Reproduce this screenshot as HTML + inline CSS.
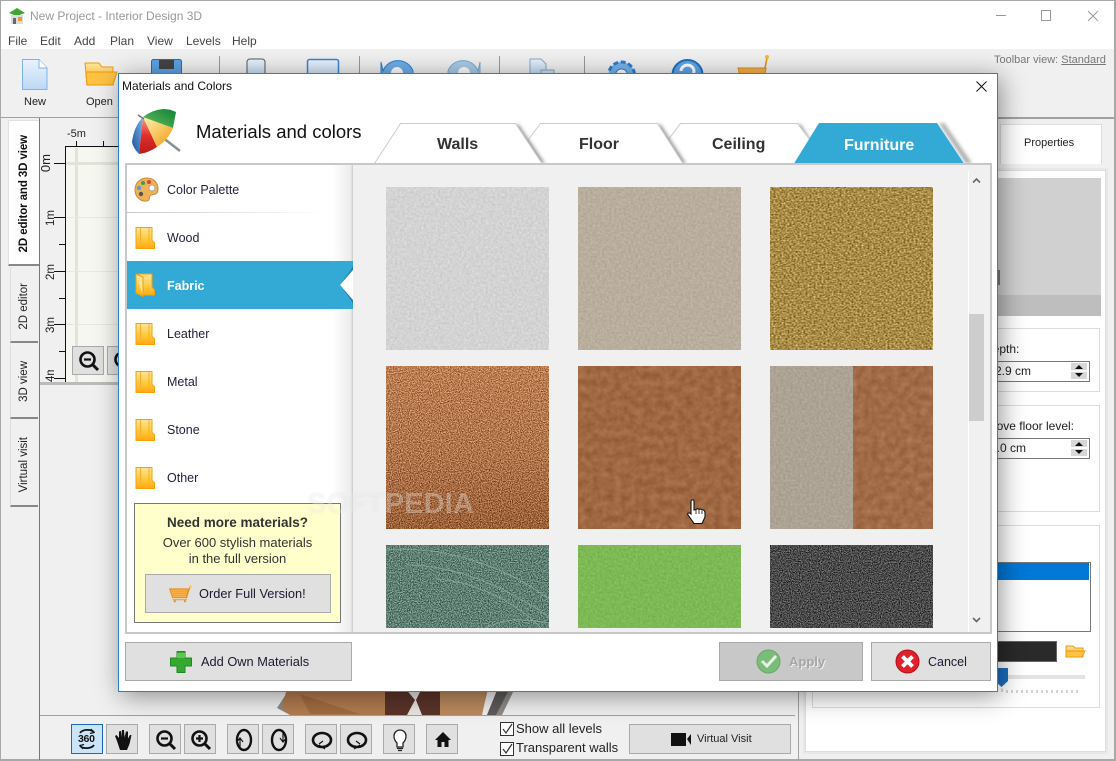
<!DOCTYPE html>
<html><head><meta charset="utf-8"><title>Interior Design 3D</title>
<style>
html,body{margin:0;padding:0;width:1116px;height:761px;overflow:hidden;background:#f0f0f0}
body{font-family:"Liberation Sans",sans-serif;font-size:12px;color:#222;position:relative}
.a{position:absolute}
.t{position:absolute;white-space:nowrap;line-height:14px}
.tb{position:absolute;background:#e0e0e0;border:1px solid #aaa;box-sizing:border-box}
.v{position:absolute;writing-mode:vertical-rl;transform:rotate(180deg);white-space:nowrap;line-height:14px}
.item{position:absolute;left:167px;font-size:12.5px;color:#1f1f3a;line-height:16px;white-space:nowrap}
.tab{position:absolute;font-weight:bold;font-size:16px;color:#333;line-height:18px;white-space:nowrap}
.btn{position:absolute;background:#e0e0e0;border:1px solid #aaa;box-sizing:border-box;font-size:12.5px;color:#1a1a30}
.vtab{position:absolute;background:#f0f0f0;border-bottom:2px solid #888;border-left:1px solid #ddd;box-sizing:border-box}
.grp{position:absolute;border:1px solid #ddd;box-sizing:border-box;left:812px;width:288px;background:#fff}
.inp{position:absolute;border:1px solid #777;box-sizing:border-box;background:#fff;left:980px;width:110px;height:21px}
</style></head><body>
<svg width="0" height="0" style="position:absolute"><defs>
<linearGradient id="fg" x1="0" y1="0" x2="0" y2="1"><stop offset="0" stop-color="#ffe49a"/><stop offset=".55" stop-color="#ffc93f"/><stop offset="1" stop-color="#ffa80a"/></linearGradient>
<linearGradient id="og" x1="0" y1="0" x2="0" y2="1"><stop offset="0" stop-color="#ffe49a"/><stop offset="1" stop-color="#f7a616"/></linearGradient>
<linearGradient id="bg" x1="0" y1="0" x2="0" y2="1"><stop offset="0" stop-color="#eaf3fd"/><stop offset="1" stop-color="#bcd8f4"/></linearGradient>
<symbol id="folder" viewBox="0 0 21 22"><path d="M1 .5H17V13.5L19.5 16V21.5H1Z" fill="url(#fg)" stroke="#f6a00a"/><path d="M5.5 1V21M14 1V21" stroke="#f7b028" stroke-width="1"/></symbol>
<symbol id="zm" viewBox="0 0 22 22"><circle cx="9.500" cy="9.500" r="7" fill="none" stroke="#111" stroke-width="2.600"/><path d="M14.500 14.500L20 20" stroke="#111" stroke-width="3"/><path d="M6 9.500H13" stroke="#111" stroke-width="2.200"/></symbol>
<symbol id="zp" viewBox="0 0 22 22"><circle cx="9.500" cy="9.500" r="7" fill="none" stroke="#111" stroke-width="2.600"/><path d="M14.500 14.500L20 20" stroke="#111" stroke-width="3"/><path d="M6 9.500H13M9.500 6V13" stroke="#111" stroke-width="2.200"/></symbol>
<symbol id="cart" viewBox="0 0 36 24"><path d="M1 5H27L24 17H5Z" fill="#f9b24b" stroke="#ea8d12" stroke-width="1.500"/><path d="M4 8H25M5 11H24M6 14H24" stroke="#d98d20" stroke-width="1" stroke-dasharray="1.500 1"/><path d="M24 18L29 2" stroke="#ea8d12" stroke-width="1.500"/><circle cx="29.500" cy="2" r="1.800" fill="#ffc53a"/><path d="M5 20H25" stroke="#ea8d12" stroke-width="1.200"/><circle cx="8" cy="22" r="1.500" fill="#ea8d12"/><circle cx="22" cy="22" r="1.500" fill="#ea8d12"/></symbol>
<filter id="n1" x="0" y="0" width="100%" height="100%" color-interpolation-filters="sRGB"><feTurbulence type="fractalNoise" baseFrequency=".42" numOctaves="2" seed="3"/><feColorMatrix values="1 0 0 0 0 1 0 0 0 0 1 0 0 0 0 0 0 0 0 1"/><feComposite in="SourceGraphic" operator="arithmetic" k1="0" k2="1" k3=".14" k4="-.07"/></filter>
<filter id="n2" x="0" y="0" width="100%" height="100%" color-interpolation-filters="sRGB"><feTurbulence type="fractalNoise" baseFrequency=".5 .62" numOctaves="2" seed="8"/><feColorMatrix values="1 0 0 0 0 1 0 0 0 0 1 0 0 0 0 0 0 0 0 1"/><feComposite in="SourceGraphic" operator="arithmetic" k1="0" k2="1" k3=".75" k4="-.375"/></filter>
<filter id="n3" x="0" y="0" width="100%" height="100%" color-interpolation-filters="sRGB"><feTurbulence type="fractalNoise" baseFrequency=".9" numOctaves="2" seed="5"/><feColorMatrix values="1 0 0 0 0 1 0 0 0 0 1 0 0 0 0 0 0 0 0 1"/><feComposite in="SourceGraphic" operator="arithmetic" k1="0" k2="1" k3="1" k4="-.5"/></filter>
<filter id="n4" x="0" y="0" width="100%" height="100%" color-interpolation-filters="sRGB"><feTurbulence type="fractalNoise" baseFrequency=".14" numOctaves="3" seed="11"/><feColorMatrix values="1 0 0 0 0 1 0 0 0 0 1 0 0 0 0 0 0 0 0 1"/><feComposite in="SourceGraphic" operator="arithmetic" k1="0" k2="1" k3=".16" k4="-.08"/></filter>
<linearGradient id="cu" x1="0" y1="0" x2="0" y2="1"><stop offset="0" stop-color="#bb7e53"/><stop offset=".55" stop-color="#b0744b"/><stop offset="1" stop-color="#9a6038"/></linearGradient>
</defs></svg>

<!-- window frame -->
<div class="a" style="left:0;top:0;width:1116px;height:761px;box-sizing:border-box;border:1px solid #a8a8a8;border-width:1px 2px 2px 1px"></div>
<div class="a" style="left:1px;top:1px;width:1113px;height:48px;background:#fff"></div>
<svg class="a" style="left:8px;top:7px" width="19" height="18"><path d="M1 6L9 1L17 6L9 9Z" fill="#3fa535"/><path d="M3 8H15V17H3Z" fill="#d9dde0"/><path d="M5 11H8V17H5Z" fill="#667"/><path d="M10 10H14V14H10Z" fill="#e8a020"/></svg>
<div class="t" style="left:30px;top:9px;color:#999">New Project - Interior Design 3D</div>
<div class="t" style="left:8px;top:34px;color:#444">File</div>
<div class="t" style="left:40px;top:34px;color:#444">Edit</div>
<div class="t" style="left:74px;top:34px;color:#444">Add</div>
<div class="t" style="left:110px;top:34px;color:#444">Plan</div>
<div class="t" style="left:147px;top:34px;color:#444">View</div>
<div class="t" style="left:186px;top:34px;color:#444">Levels</div>
<div class="t" style="left:232px;top:34px;color:#444">Help</div>
<svg class="a" style="left:995px;top:8px" width="110" height="16" fill="none" stroke="#999"><path d="M1 7.500H11"/><rect x="46.500" y="2.500" width="9" height="10"/><path d="M93 3L103 13M103 3L93 13"/></svg>

<!-- toolbar -->
<div class="a" style="left:1px;top:49px;width:1113px;height:68px;background:#f0f0f0;border-bottom:1px solid #a0a0a0"></div>
<svg class="a" style="left:0;top:50px" width="800" height="42">
<path d="M22.500 9.500H39L47 18V39.500H22.500Z" fill="url(#bg)" stroke="#7fb2e8"/><path d="M39 9.500V18H47" fill="#fff" stroke="#7fb2e8"/>
<path d="M85 13H99L102 17H113V35H87Z" fill="url(#og)" stroke="#e89a10"/><path d="M86 22H117L113 35H87Z" fill="#ffc242" stroke="#e89a10"/>
<rect x="151.500" y="9.500" width="30" height="30" rx="2" fill="#5da2e4" stroke="#1f6fc0"/><rect x="159" y="10" width="15" height="9" fill="#444"/>
<path d="M219.500 6V24M359.500 6V24M499.500 6V24M584.500 6V24" stroke="#999"/>
<rect x="247" y="9" width="18" height="20" rx="3" fill="url(#bg)" stroke="#555"/>
<rect x="307.500" y="9.500" width="31" height="25" rx="2" fill="url(#bg)" stroke="#3a86d0" stroke-width="1.500"/>
<path d="M381 12L383 21A16 16 0 0 1 413 21V26H381Z" fill="#6daee8" stroke="#2c7fd0"/><circle cx="397" cy="23" r="6" fill="#fff"/>
<path d="M480 12L478 21A16 16 0 0 0 448 21V26H480Z" fill="#a9cbe8" stroke="#7ba9d0"/><circle cx="464" cy="23" r="6" fill="#fff"/>
<path d="M530 9H541L546 14V26H530Z" fill="url(#bg)" stroke="#88a8cc"/><rect x="541" y="20" width="13" height="8" fill="#cfe0f2" stroke="#88a8cc"/>
<circle cx="621.500" cy="25" r="13" fill="#77b3ea" stroke="#2c7fd0" stroke-width="3" stroke-dasharray="5 2.500"/><circle cx="621.500" cy="25" r="6" fill="#fff" stroke="#2c7fd0"/>
<circle cx="687.500" cy="25" r="15" fill="#5ea6e6" stroke="#1f6fc0" stroke-width="2"/><path d="M681 21A6.500 6 0 1 1 689 27" fill="none" stroke="#fff" stroke-width="3"/>
<path d="M738 18H766L764 30H741Z" fill="#f7b14a" stroke="#e58a10"/><path d="M765 18L767 8" stroke="#e58a10" stroke-width="1.500"/><circle cx="767" cy="7" r="2" fill="#ffb52a"/>
</svg>
<div class="t" style="left:24px;top:95px;color:#222;font-size:11px">New</div>
<div class="t" style="left:86px;top:95px;color:#222;font-size:11px">Open</div>
<div class="t" style="left:994px;top:53px;color:#777;font-size:11px">Toolbar view: <span style="text-decoration:underline">Standard</span></div>

<!-- left rail -->
<div class="a" style="left:39px;top:118px;width:1px;height:642px;background:#777"></div>
<div class="a" style="left:8px;top:120px;width:31px;height:146px;background:#fff;border-bottom:2px solid #888;box-sizing:border-box;border-left:1px solid #e2e2e2;border-top:1px solid #e2e2e2"></div>
<div class="v" style="left:17px;top:135px;font-weight:bold;color:#111;font-size:11.500px;letter-spacing:-.1px">2D editor and 3D view</div>
<div class="vtab" style="left:10px;top:267px;width:28px;height:76px"></div>
<div class="v" style="left:17px;top:283px;font-size:11.500px;color:#222">2D editor</div>
<div class="vtab" style="left:10px;top:345px;width:28px;height:74px"></div>
<div class="v" style="left:17px;top:361px;font-size:11.500px;color:#222">3D view</div>
<div class="vtab" style="left:10px;top:420px;width:28px;height:87px"></div>
<div class="v" style="left:17px;top:437px;font-size:11.500px;color:#222">Virtual visit</div>

<!-- canvas -->
<div class="a" style="left:40px;top:118px;width:760px;height:264px;background:#f0f0f0"></div>
<div class="a" style="left:65px;top:148px;width:735px;height:234px;background:#f7f7f1"></div>
<div class="a" style="left:75px;top:148px;width:3px;height:234px;background:#e3e3da"></div>
<div class="a" style="left:65px;top:162px;width:735px;height:3px;background:#e3e3da"></div>
<div class="a" style="left:65px;top:217px;width:735px;height:1px;background:#e8e8e0"></div>
<div class="a" style="left:65px;top:271px;width:735px;height:1px;background:#e8e8e0"></div>
<div class="a" style="left:65px;top:324px;width:735px;height:1px;background:#e8e8e0"></div>
<svg class="a" style="left:40px;top:130px" width="80" height="255" fill="none" stroke="#111"><path d="M25.500 17V252M25 16.500H80M36.500 11V16M63.500 11V16M14 33.500H25M14 87.500H25M19 114.500H25M14 141.500H25M19 168.500H25M14 194.500H25M19 221.500H25M14 248.500H25"/></svg>
<div class="t" style="left:67px;top:127px;font-size:11px;color:#222">-5m</div>
<div class="v" style="left:39px;top:154px;font-size:13px;color:#222">0m</div>
<div class="v" style="left:44px;top:210px;font-size:11.500px;color:#222">1m</div>
<div class="v" style="left:44px;top:264px;font-size:11.500px;color:#222">2m</div>
<div class="v" style="left:44px;top:317px;font-size:11.500px;color:#222">3m</div>
<div class="v" style="left:44px;top:370px;font-size:11.500px;color:#222;height:12px;overflow:hidden">4m</div>
<div class="tb" style="left:72px;top:346px;width:32px;height:29px"><svg style="position:absolute;left:5px;top:3px" width="22" height="22"><use href="#zm"/></svg></div>
<div class="tb" style="left:107px;top:346px;width:32px;height:29px"><svg style="position:absolute;left:5px;top:3px" width="22" height="22"><use href="#zp"/></svg></div>
<div class="a" style="left:40px;top:382px;width:760px;height:3px;background:#bbb"></div>

<!-- 3D scene bottom -->
<svg class="a" style="left:270px;top:688px" width="250" height="28"><path d="M7 20L20 0H245L232 27H20Z" fill="#8d8a86"/><path d="M17 0H225L218 27H20L12 20Z" fill="#b27c4f"/><path d="M30 6L90 26H40Z" fill="#a26c40"/><path d="M115 0H170V27H115Z" fill="#5a3428"/><path d="M135 0L145 12L137 27H152L146 12L152 0Z" fill="#e9e6e0"/><path d="M170 0H215V27H170Z" fill="#bb8a5e"/><path d="M218 0H228L217 27H212Z" fill="#eee"/><path d="M228 0H240L226 27H217Z" fill="#5d5a58"/></svg>

<!-- bottom toolbar -->
<div class="a" style="left:40px;top:715px;width:755px;height:1px;background:#a0a0a0"></div>
<div class="tb" style="left:71px;top:724px;width:32px;height:30px;background:#cce4f7;border-color:#1b6ab8"><svg style="position:absolute;left:5px;top:1px" width="20" height="26" fill="none" stroke="#111" stroke-width="1.800"><path d="M3 7A8 5 0 0 1 17 6M3 20A8 5 0 0 0 17 19"/><path d="M14 3L17 6.500L13 7.500M6 23L3 19.500L7 18.500" stroke-width="1.200"/></svg><div class="t" style="left:6px;top:7px;font-weight:bold;font-size:10.500px;color:#111;letter-spacing:-.3px">360</div></div>
<div class="tb" style="left:106px;top:724px;width:32px;height:30px"><svg style="position:absolute;left:6px;top:3px" width="20" height="23"><path d="M4 13L2 8L3.500 7L6 10V3.500L8 3V9.500L9 2H11L11.500 9.500L13 3.500H15V10.500L17 7H18.500L16.500 16L14 22H7Z" fill="#111"/></svg></div>
<div class="tb" style="left:149px;top:724px;width:32px;height:30px"><svg style="position:absolute;left:5px;top:4px" width="22" height="22"><use href="#zm"/></svg></div>
<div class="tb" style="left:184px;top:724px;width:32px;height:30px"><svg style="position:absolute;left:5px;top:4px" width="22" height="22"><use href="#zp"/></svg></div>
<div class="tb" style="left:227px;top:724px;width:32px;height:30px"><svg style="position:absolute;left:6px;top:2px" width="20" height="25" fill="none" stroke="#111" stroke-width="2.400"><ellipse cx="10" cy="13" rx="7" ry="10"/><path d="M6 21V12M3 15L6 11L9 15" stroke-width="1.200" fill="#fff"/></svg></div>
<div class="tb" style="left:262px;top:724px;width:32px;height:30px"><svg style="position:absolute;left:6px;top:2px" width="20" height="25" fill="none" stroke="#111" stroke-width="2.400"><ellipse cx="10" cy="13" rx="7" ry="10"/><path d="M14 5V14M11 11L14 15L17 11" stroke-width="1.200" fill="#fff"/></svg></div>
<div class="tb" style="left:305px;top:724px;width:32px;height:30px"><svg style="position:absolute;left:5px;top:6px" width="22" height="20" fill="none" stroke="#111" stroke-width="2.600"><ellipse cx="11" cy="9" rx="9" ry="7"/><path d="M8 14L14 18M8 13L12 10" stroke-width="1.200"/></svg></div>
<div class="tb" style="left:340px;top:724px;width:32px;height:30px"><svg style="position:absolute;left:5px;top:6px" width="22" height="20" fill="none" stroke="#111" stroke-width="2.600"><ellipse cx="11" cy="9" rx="9" ry="7"/><path d="M14 14L8 18M14 13L10 10" stroke-width="1.200"/></svg></div>
<div class="tb" style="left:383px;top:724px;width:32px;height:30px"><svg style="position:absolute;left:8px;top:3px" width="16" height="24" fill="#fff" stroke="#222" stroke-width="1.300"><path d="M5 15C2 12 2 9 2 8A6 6 0 0 1 14 8C14 9 14 12 11 15V19H5Z"/><path d="M5 20.500H11M6 22.500H10"/></svg></div>
<div class="tb" style="left:426px;top:724px;width:32px;height:30px"><svg style="position:absolute;left:7px;top:6px" width="18" height="17"><path d="M9 1L17 9H14.500V16H10.500V11H7.500V16H3.500V9H1Z" fill="#111"/></svg></div>
<svg class="a" style="left:499px;top:721px" width="16" height="36" fill="#fff" stroke="#333"><rect x="1.500" y="1.500" width="13" height="13"/><rect x="1.500" y="21.500" width="13" height="13"/><path d="M4 8L7 12L13 3M4 28L7 32L13 23" fill="none" stroke-width="1.200"/></svg>
<div class="t" style="left:516px;top:722px;font-size:13px;color:#222">Show all levels</div>
<div class="t" style="left:516px;top:741px;font-size:13px;color:#222">Transparent walls</div>
<div class="tb" style="left:629px;top:724px;width:162px;height:30px"><svg style="position:absolute;left:41px;top:8px" width="22" height="13"><rect x="0" y="0" width="15" height="13" fill="#111"/><path d="M16 6L20 1V12Z" fill="#111"/></svg><div class="t" style="left:67px;top:7px;font-size:11px;color:#222">Virtual Visit</div></div>

<!-- right panel -->
<div class="a" style="left:798px;top:118px;width:316px;height:1px;background:#a0a0a0"></div>
<div class="a" style="left:798px;top:118px;width:1px;height:642px;background:#a0a0a0"></div>
<div class="a" style="left:1000px;top:124px;width:102px;height:40px;background:#fff;border:1px solid #ddd;border-bottom:0;box-sizing:border-box"></div>
<div class="t" style="left:1024px;top:136px;font-size:11px;color:#222">Properties</div>
<div class="a" style="left:805px;top:170px;width:301px;height:582px;background:#fff;border:1px solid #ddd;box-shadow:0 0 0 2px #e8e8e8;box-sizing:border-box"></div>
<div class="a" style="left:810px;top:178px;width:291px;height:117px;background:#d0d0d0"></div>
<div class="a" style="left:810px;top:295px;width:291px;height:21px;background:#bebebe"></div>
<div class="a" style="left:997px;top:270px;width:3px;height:15px;background:#777"></div>
<div class="grp" style="top:328px;height:64px"></div>
<div class="t" style="left:984px;top:342px;font-size:12px;color:#222">Depth:</div>
<div class="inp" style="top:361px"></div>
<div class="t" style="left:960px;top:364px;font-size:12px;color:#222;width:71px;text-align:right">12.9 cm</div>
<svg class="a" style="left:1070px;top:362px" width="18" height="18"><rect x="1" y="1" width="16" height="7" fill="#d8d8d8"/><rect x="1" y="10" width="16" height="7" fill="#d8d8d8"/><path d="M5 7L9 3L13 7ZM5 11H13L9 15Z" fill="#111"/></svg>
<div class="grp" style="top:405px;height:107px"></div>
<div class="t" style="left:960px;top:419px;font-size:12px;color:#222;width:114px;text-align:right">above floor level:</div>
<div class="inp" style="top:438px"></div>
<div class="t" style="left:960px;top:441px;font-size:12px;color:#222;width:66px;text-align:right">0.0 cm</div>
<svg class="a" style="left:1070px;top:439px" width="18" height="18"><rect x="1" y="1" width="16" height="7" fill="#d8d8d8"/><rect x="1" y="10" width="16" height="7" fill="#d8d8d8"/><path d="M5 7L9 3L13 7ZM5 11H13L9 15Z" fill="#111"/></svg>
<div class="grp" style="top:525px;height:183px"></div>
<div class="a" style="left:820px;top:562px;width:271px;height:70px;border:1px solid #777;box-sizing:border-box;background:#fff"></div>
<div class="a" style="left:822px;top:563px;width:267px;height:17px;background:#0078d7"></div>
<div class="a" style="left:820px;top:641px;width:237px;height:21px;background:#2a2a2a;border:1px solid #666;box-sizing:border-box"></div>
<svg class="a" style="left:1064px;top:644px" width="22" height="15"><path d="M2 2H9L11 4H19V13H2Z" fill="url(#og)" stroke="#e89a10"/><path d="M2 7H21L18 13H2Z" fill="#ffc242" stroke="#e89a10"/></svg>
<div class="a" style="left:820px;top:675px;width:265px;height:4px;background:#e3e3e3"></div>
<svg class="a" style="left:990px;top:667px" width="100" height="28"><path d="M5 1H18V14L11.500 20L5 14Z" fill="#1a6fc0"/><path d="M12 21.500V25M17 23V26M22 23V26M27 23V26M32 23V26M37 23V26M42 23V26M47 23V26M52 23V26M57 23V26M62 23V26M67 23V26M72 23V26M77 23V26M82 23V26M87 23V26" stroke="#aaa"/></svg>

<!-- Dialog -->
<div class="a" style="left:118px;top:73px;width:880px;height:619px;background:#fff;border:1px solid #2b7fc9;box-sizing:border-box;box-shadow:3px 4px 24px rgba(0,0,0,.42)"></div>
<div class="t" style="left:122px;top:79px;color:#111">Materials and Colors</div>
<svg class="a" style="left:975px;top:80px" width="13" height="13" fill="none" stroke="#111"><path d="M1.500 1.500L11.500 11.500M11.500 1.500L1.500 11.500"/></svg>
<svg class="a" style="left:130px;top:106px" width="52" height="50">
<defs><linearGradient id="ye" x1="0" y1="0" x2="1" y2="1"><stop offset="0" stop-color="#fff2b0"/><stop offset="1" stop-color="#f19a12"/></linearGradient>
<linearGradient id="re" x1="0" y1="0" x2="0" y2="1"><stop offset="0" stop-color="#f5a08a"/><stop offset=".5" stop-color="#e0302a"/><stop offset="1" stop-color="#b81a1a"/></linearGradient>
<linearGradient id="gr" x1="0" y1="1" x2="1" y2="0"><stop offset="0" stop-color="#6ac35a"/><stop offset="1" stop-color="#0f7f3a"/></linearGradient>
<linearGradient id="bl" x1="1" y1="0" x2="0" y2="1"><stop offset="0" stop-color="#7fb6e8"/><stop offset="1" stop-color="#174f9e"/></linearGradient></defs>
<path d="M32 31L50 45" stroke="#8a8f94" stroke-width="2.500"/>
<path d="M2 36Q4 20 13 11L9 48Q3 42 2 36Z" fill="url(#bl)"/>
<path d="M13 11L27 41Q18 47 9 48Z" fill="url(#re)"/>
<path d="M13 11L43 22Q38 34 27 41Z" fill="url(#ye)"/>
<path d="M13 11Q22 4 33 3Q40 3 46 6L43 22Z" fill="url(#gr)"/>
<path d="M8 9L14 13" stroke="#777" stroke-width="1.500"/>
</svg>
<div class="t" style="left:196px;top:121px;font-size:18.500px;line-height:22px;color:#111">Materials and colors</div>

<!-- tabs -->
<svg class="a" style="left:370px;top:120px" width="610" height="46">
<defs><filter id="sh" x="-30%" y="-10%" width="160%" height="125%"><feGaussianBlur stdDeviation="1.800"/></filter></defs>
<path d="M427 3.500L452 43.500H440L424 8Z" fill="#999" filter="url(#sh)" transform="translate(3 0)"/>
<path d="M298 20L310.500 3.500H427.500L440 20L453 43.500H313Z" fill="#fff" stroke="#ccc"/>
<path d="M287 3.500L313 43.500H300L284 8Z" fill="#999" filter="url(#sh)" transform="translate(3 0)"/>
<path d="M158 20L170.500 3.500H287.500L313 43.500H172Z" fill="#fff" stroke="#ccc"/>
<path d="M145 3.500L172 43.500H160L142 8Z" fill="#999" filter="url(#sh)" transform="translate(3 0)"/>
<path d="M4.500 43.500L30.500 3.500H145.500L172 43.500Z" fill="#fff" stroke="#ccc"/>
<path d="M567 3L594 43.500H600L572 3Z" fill="#aaa" filter="url(#sh)" transform="translate(2 0)"/>
<path d="M424 43.500L449 3H567L594 43.500Z" fill="#33aad6"/>
</svg>
<div class="tab" style="left:437px;top:136px">Walls</div>
<div class="tab" style="left:579px;top:136px">Floor</div>
<div class="tab" style="left:712px;top:136px">Ceiling</div>
<div class="tab" style="left:844px;top:137px;color:#fff">Furniture</div>

<!-- main frame -->
<div class="a" style="left:125px;top:163px;width:867px;height:471px;border:2px solid #c8c8c8;box-sizing:border-box;background:#f0f0f0"></div>
<div class="a" style="left:127px;top:165px;width:226px;height:467px;background:linear-gradient(90deg,#fff 0,#fff 91%,#ececec 99%,#c8c8c8 100%)"></div>

<!-- list -->
<svg class="a" style="left:134px;top:177px" width="26" height="26"><path d="M13 1C5 1 1 7 1 13C1 20 7 25 13 24C17 23.500 14 19 17 18C20 17 24 18 24 12C24 5 19 1 13 1Z" fill="#f0b257" stroke="#c9893a"/><circle cx="9" cy="6" r="2" fill="#3ca34a"/><circle cx="15" cy="5" r="2" fill="#d8433b"/><circle cx="5" cy="11" r="2.200" fill="#5b9bd5"/><circle cx="7" cy="17" r="2.200" fill="#555"/><circle cx="18" cy="11" r="3" fill="#fff" stroke="#aaa"/></svg>
<div class="item" style="top:182px">Color Palette</div>
<div class="a" style="left:127px;top:212px;width:200px;height:1px;background:linear-gradient(90deg,#c8c8c8,#fff)"></div>
<svg class="a" style="left:135px;top:227px" width="21" height="22"><use href="#folder"/></svg>
<div class="item" style="top:230px">Wood</div>
<div class="a" style="left:127px;top:261px;width:226px;height:48px;background:#33aad6"></div>
<svg class="a" style="left:338px;top:261px" width="15" height="48"><path d="M15 5V43L12 38L2 24L12 10Z" fill="#2b7fb6"/><path d="M15 9V39L2 24Z" fill="#fff"/></svg>
<svg class="a" style="left:135px;top:273px" width="21" height="24"><path d="M1 1H17V14L19.500 17V22H8V23.500L1 20Z" fill="url(#fg)" stroke="#f0a010"/><path d="M1 1L8 4V23" fill="#ffe596" stroke="#f0a010"/></svg>
<div class="item" style="top:278px;color:#fff;font-weight:bold">Fabric</div>
<svg class="a" style="left:135px;top:323px" width="21" height="22"><use href="#folder"/></svg>
<div class="item" style="top:326px">Leather</div>
<svg class="a" style="left:135px;top:371px" width="21" height="22"><use href="#folder"/></svg>
<div class="item" style="top:374px">Metal</div>
<svg class="a" style="left:135px;top:419px" width="21" height="22"><use href="#folder"/></svg>
<div class="item" style="top:422px">Stone</div>
<svg class="a" style="left:135px;top:467px" width="21" height="22"><use href="#folder"/></svg>
<div class="item" style="top:470px">Other</div>

<!-- promo -->
<div class="a" style="left:134px;top:503px;width:207px;height:120px;background:#ffffcc;border:1px solid #777;box-sizing:border-box"></div>
<div class="t" style="left:134px;width:207px;text-align:center;top:516px;font-weight:bold;font-size:13.500px;color:#333">Need more materials?</div>
<div class="t" style="left:134px;width:207px;text-align:center;top:536px;font-size:13px;color:#333">Over 600 stylish materials</div>
<div class="t" style="left:134px;width:207px;text-align:center;top:552px;font-size:13px;color:#333">in the full version</div>
<div class="btn" style="left:145px;top:574px;width:186px;height:39px"></div>
<svg class="a" style="left:169px;top:584px" width="26" height="20"><use href="#cart"/></svg>
<div class="t" style="left:199px;top:587px;font-size:12.800px;color:#1a1a30">Order Full Version!</div>

<!-- swatches -->
<svg class="a" style="left:386px;top:187px" width="547" height="441">
<rect x="0" y="0" width="163" height="163" fill="#d3d3d3" filter="url(#n1)"/>
<rect x="192" y="0" width="163" height="163" fill="#b9ae9d" filter="url(#n1)"/>
<rect x="384" y="0" width="163" height="163" fill="#a98b48" filter="url(#n2)"/>
<rect x="0" y="179" width="163" height="163" fill="url(#cu)" filter="url(#n3)"/>
<rect x="192" y="179" width="163" height="163" fill="#9f6842" filter="url(#n4)"/>
<rect x="384" y="179" width="83" height="163" fill="#aca394" filter="url(#n1)"/>
<rect x="467" y="179" width="80" height="163" fill="#a16b47" filter="url(#n4)"/>
<rect x="0" y="358" width="163" height="83" fill="#5f7f72" filter="url(#n3)"/>
<g fill="none" stroke="#9bb8ab" stroke-width="1" opacity=".6"><path d="M0 363C60 358 120 380 163 412M20 378C70 378 120 400 163 430M50 392C90 395 130 415 155 441M100 441C120 430 140 432 163 436"/></g>
<rect x="192" y="358" width="163" height="83" fill="#7db955" filter="url(#n1)"/>
<rect x="384" y="358" width="163" height="83" fill="#4a4a4a" filter="url(#n3)"/>
</svg>

<!-- scrollbar -->
<div class="a" style="left:968px;top:171px;width:1px;height:461px;background:#fff"></div>
<div class="a" style="left:969px;top:314px;width:15px;height:107px;background:#cdcdcd"></div>
<svg class="a" style="left:969px;top:174px" width="15" height="452" fill="none" stroke="#666" stroke-width="1.600"><path d="M4 8.500L7.500 5L11 8.500M4 444L7.500 447.500L11 444"/></svg>

<!-- watermark -->
<div class="t" style="left:307px;top:489px;font-size:29px;line-height:30px;font-weight:bold;color:rgba(255,255,255,.32);text-shadow:0 0 2px rgba(0,0,0,.06);letter-spacing:.1px">SOFTPEDIA</div>

<!-- cursor -->
<svg class="a" style="left:685px;top:499px" width="22" height="26"><path d="M6 2C6 .5 9 .5 9 2V11L11 10.500C12 9.500 13 9.500 14 10.500C15 9.800 16 9.800 17 11C19 10.500 20 12 20 14V18L17 24.500H9L3 16C2 14 4 13 6 15Z" fill="#fff" stroke="#111" stroke-width="1.100"/><path d="M11 11V15M14 11V15M17 12V15" stroke="#111" stroke-width=".8"/></svg>

<!-- dialog buttons -->
<div class="btn" style="left:125px;top:642px;width:227px;height:39px"></div>
<svg class="a" style="left:169px;top:650px" width="24" height="24"><path d="M8 1.500H16V8H22.500V16H16V22.500H8V16H1.500V8H8Z" fill="#35a832" stroke="#1e8a1e" stroke-linejoin="round"/><path d="M8 3H16V8H8Z" fill="#5cc84e"/></svg>
<div class="t" style="left:201px;top:655px;font-size:12.800px;color:#1a1a30">Add Own Materials</div>
<div class="btn" style="left:719px;top:642px;width:144px;height:39px;background:#c8c8c8"></div>
<svg class="a" style="left:756px;top:649px" width="25" height="25"><circle cx="12.500" cy="12.500" r="11.500" fill="#79bd79" stroke="#65a868"/><path d="M6 12L11 17L20 7" fill="none" stroke="#e6f2e6" stroke-width="3"/></svg>
<div class="t" style="left:789px;top:655px;font-size:13px;font-weight:bold;color:#a5a5a5;text-shadow:1px 1px 0 #eee">Apply</div>
<div class="btn" style="left:871px;top:642px;width:120px;height:39px"></div>
<svg class="a" style="left:895px;top:649px" width="25" height="25"><circle cx="12.500" cy="12.500" r="11.500" fill="#e0202a" stroke="#b01018"/><path d="M7.500 7.500L17.500 17.500M17.500 7.500L7.500 17.500" stroke="#fff" stroke-width="4"/></svg>
<div class="t" style="left:928px;top:655px;font-size:12.500px;color:#1a1a30">Cancel</div>
</body></html>
